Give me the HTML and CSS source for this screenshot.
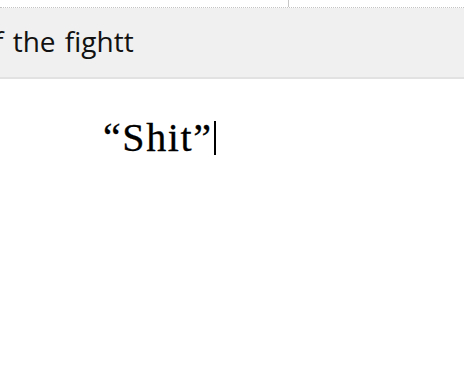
FILE: index.html
```html
<!DOCTYPE html>
<html>
<head>
<meta charset="utf-8">
<link rel="stylesheet" href="styles.css">
</head>
<body>
<div class="topstrip"><div class="tab-left"></div><div class="tab-right"></div></div>
<div class="bar"><span class="bar-text">f the fightt</span></div>
<div class="doc"><p class="line">“Shit”<span class="caret"></span></p></div>
</body>
</html>
```
FILE: styles.css
```css
html, body { margin: 0; padding: 0; background: #fff; }
body { width: 464px; height: 386px; overflow: hidden; }
.topstrip { height: 7px; display: flex; border-bottom: 1px dotted #c4c4c4; }
.tab-left { width: 288px; border-right: 1px solid #c8c8c8; }
.tab-right { flex: 1; }
.bar {
  height: 69px;
  background: #f0f0f0;
  border-bottom: 2px solid #e2e2e2;
  display: flex;
  align-items: center;
  overflow: hidden;
}
.bar-text {
  font-family: "Open Sans", sans-serif;
  font-size: 28px;
  color: #111;
  margin-left: -6px;
  margin-top: -4px;
  word-spacing: 2px;
  white-space: nowrap;
}
.doc { padding-top: 37px; padding-left: 103px; }
.line {
  margin: 0;
  font-family: "Liberation Serif", serif;
  font-size: 40px;
  letter-spacing: 1.6px;
  color: #000;
  -webkit-text-stroke: 0.3px #000;
  line-height: 44px;
  display: flex;
  align-items: center;
}
.caret { display: inline-block; width: 2px; height: 34px; background: #000; margin-left: 1px; }
```
